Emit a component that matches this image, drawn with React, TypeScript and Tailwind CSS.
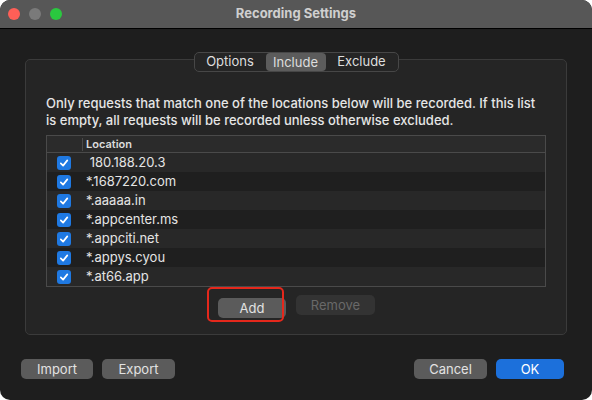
import React from "react";

const font = { fontFamily: 'Inter, "Noto Sans", "Liberation Sans", sans-serif' };

const locations = [
    " 180.188.20.3",
    "*.1687220.com",
    "*.aaaaa.in",
    "*.appcenter.ms",
    "*.appciti.net",
    "*.appys.cyou",
    "*.at66.app",
];

const Check: React.FC = () => (
    <span className="flex h-[14px] w-[14px] items-center justify-center rounded-[3px] bg-[#1f79e2]">
        <svg width="10" height="10" viewBox="0 0 10 10" fill="none">
            <path d="M1.8 5.3 L4.1 7.6 L8.3 2.4" stroke="white" strokeWidth="1.7" strokeLinecap="round" strokeLinejoin="round" />
        </svg>
    </span>
);

type Variant = "normal" | "disabled" | "primary";

const variants: Record<Variant, string> = {
    normal: "bg-[#5b5b5b] text-[#e2e2e2]",
    disabled: "bg-[#333333] text-[#696969]",
    primary: "bg-[#1c70db] text-white",
};

const Button: React.FC<{ className?: string; variant?: Variant; children: React.ReactNode }> = ({ className = "", variant = "normal", children }) => (
    <button className={`h-[20px] rounded-[5px] text-[13px] leading-[20px] ${variants[variant]} ${className}`}>
        {children}
    </button>
);

export default function App() {
    return (
        <div className="h-[400px] w-[592px] bg-white" style={font}>
            <div className="flex h-full w-full flex-col overflow-hidden rounded-[10px] bg-[#1e1e1e]">
                {/* title bar */}
                <div className="relative flex h-[29px] shrink-0 items-center border-b border-black bg-[#575757]">
                    <div className="flex gap-[9px] pl-[8px]">
                        <span className="h-[12px] w-[12px] rounded-full bg-[#fe5f57]" />
                        <span className="h-[12px] w-[12px] rounded-full bg-[#7a7a7a]" />
                        <span className="h-[12px] w-[12px] rounded-full bg-[#2ac83f]" />
                    </div>
                    <div className="absolute inset-0 flex items-center justify-center text-[13px] font-bold text-[#cfcfcf]">
                        Recording Settings
                    </div>
                </div>

                {/* group box */}
                <div className="relative mx-[25px] mt-[30px] h-[276px] rounded-[5px] border border-[#3b3b3b] bg-[#252525]">
                    <div className="absolute -top-[8px] left-0 right-0 flex justify-center">
                        <div className="flex h-[20px] items-center rounded-[5px] border border-[#474747] bg-[#252525] text-[13px] text-[#dedede]">
                            <span className="w-[71px] text-center">Options</span>
                            <span className="h-[18px] w-[60px] rounded-[4px] bg-[#5c5c5c] text-center leading-[18px]">Include</span>
                            <span className="w-[72px] text-center">Exclude</span>
                        </div>
                    </div>

                    <p className="mt-[35px] px-[20px] text-[13px] font-medium leading-[17px] text-[#e6e6e6]">
                        Only requests that match one of the locations below will be recorded. If this list is empty, all requests will be recorded unless otherwise excluded.
                    </p>

                    <div className="ml-[20px] mt-[6px] w-[500px] border border-[#4a4a4a]">
                        <div className="flex h-[17px] items-center border-b border-[#4a4a4a] bg-[#2b2b2b] text-[11px] font-semibold text-[#dcdcdc]">
                            <span className="w-[35px]" />
                            <span className="h-[13px] border-l border-[#4a4a4a] pl-[3px] leading-[13px]">Location</span>
                        </div>
                        {locations.map((loc, i) => (
                            <div key={loc} className={`flex h-[19px] items-center ${i % 2 === 0 ? "bg-[#282828]" : "bg-[#1f1f1f]"}`}>
                                <span className="flex w-[39px] pl-[10px]"><Check /></span>
                                <span className="whitespace-pre text-[13px] text-[#e4e4e4]">{loc}</span>
                            </div>
                        ))}
                    </div>

                    <div className="mt-[8px] flex justify-center gap-[10px] pl-[1px]">
                        <div className="relative">
                            <Button className="w-[68px]">Add</Button>
                            <span className="absolute -left-[11px] -top-[8px] h-[35px] w-[77px] rounded-[5px] border-2 border-[#e5281c]" />
                        </div>
                        <Button variant="disabled" className="w-[79px]">Remove</Button>
                    </div>
                </div>

                {/* footer */}
                <div className="mt-[24px] flex items-center justify-between pl-[21px] pr-[28px]">
                    <div className="flex gap-[9px]">
                        <Button className="w-[72px]">Import</Button>
                        <Button className="w-[73px]">Export</Button>
                    </div>
                    <div className="flex gap-[9px]">
                        <Button className="w-[73px]">Cancel</Button>
                        <Button variant="primary" className="w-[68px]">OK</Button>
                    </div>
                </div>
            </div>
        </div>
    );
}
